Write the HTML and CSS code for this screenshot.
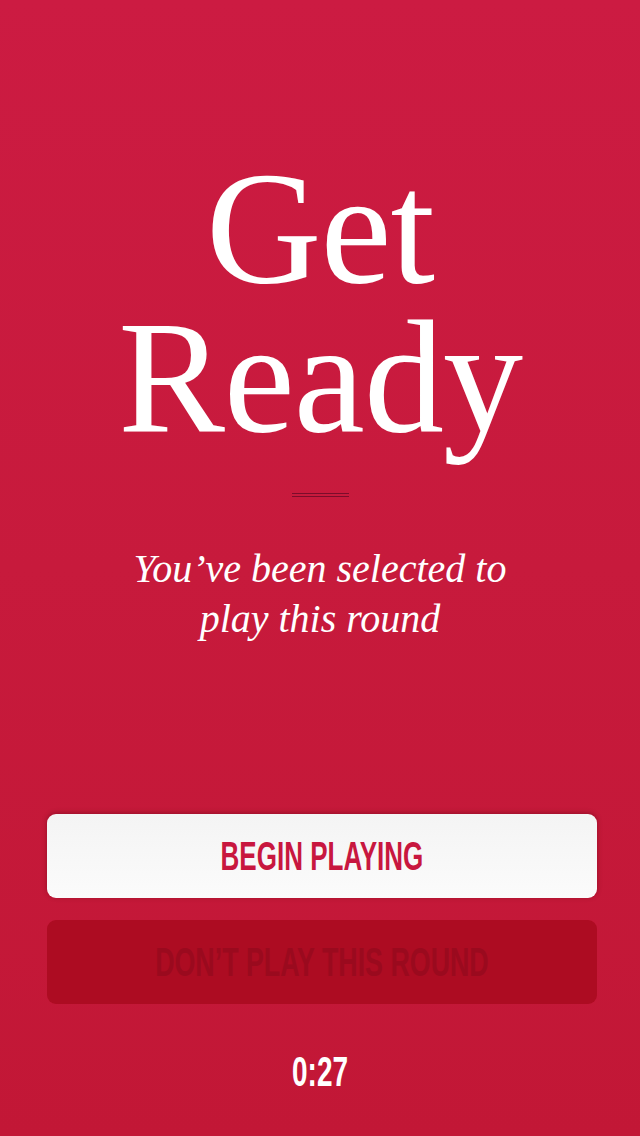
FILE: index.html
```html
<!DOCTYPE html>
<html lang="en">
<head>
<meta charset="utf-8">
<title>Get Ready</title>
<link rel="stylesheet" href="styles.css">
</head>
<body>
<main class="screen">
  <h1 class="headline">Get<br>Ready</h1>
  <div class="divider"></div>
  <p class="subtitle">You’ve been selected to<br>play this round</p>
  <div class="actions">
    <button class="btn btn-primary"><span class="label">BEGIN PLAYING</span></button>
    <button class="btn btn-secondary"><span class="label">DON’T PLAY THIS ROUND</span></button>
  </div>
  <div class="timer"><span class="label">0:27</span></div>
</main>
</body>
</html>
```
FILE: styles.css
```css
html, body {
  margin: 0;
  padding: 0;
}
body {
  width: 640px;
  height: 1136px;
  background: linear-gradient(to bottom, #cc1b42 0%, #c71a3c 50%, #c21736 100%);
  overflow: hidden;
}
.screen {
  display: flex;
  flex-direction: column;
  align-items: center;
  height: 1136px;
}
.headline {
  margin: 154px 0 0;
  font-family: "Liberation Serif", "Times New Roman", serif;
  font-weight: 400;
  font-size: 160px;
  line-height: 149px;
  color: #ffffff;
  text-align: center;
  letter-spacing: -1px;
}
.divider {
  margin-top: 41px;
  width: 57px;
  height: 2px;
  border-top: 1px solid rgba(110, 10, 40, 0.85);
  border-bottom: 1px solid rgba(110, 10, 40, 0.85);
}
.subtitle {
  margin: 47px 0 0;
  font-family: "Liberation Serif", "Times New Roman", serif;
  font-style: italic;
  font-size: 40px;
  line-height: 50px;
  color: #ffffff;
  text-align: center;
}
.actions {
  margin-top: 170px;
  margin-left: 4px;
  width: 550px;
  display: flex;
  flex-direction: column;
  gap: 22px;
}
.btn {
  height: 84px;
  border: 0;
  border-radius: 9px;
  padding: 0;
  display: flex;
  align-items: center;
  justify-content: center;
  font-family: "Liberation Sans", Arial, sans-serif;
  font-weight: 700;
  font-size: 40px;
  line-height: 1;
}
.label {
  display: inline-block;
  transform: scaleX(0.65);
  white-space: nowrap;
}
.btn-primary {
  background: linear-gradient(to bottom, #f4f4f4, #fbfbfb);
  color: #c8173f;
  box-shadow: 0 -1px 5px rgba(90, 0, 20, 0.45);
}
.btn-secondary {
  background: #ad0c22;
  color: #9a0a1e;
}
.btn-secondary .label {
  transform: scaleX(0.67);
}
.timer {
  margin-top: 46px;
  font-family: "Liberation Sans", Arial, sans-serif;
  font-weight: 700;
  font-size: 43px;
  line-height: 1;
  color: #ffffff;
}
```
